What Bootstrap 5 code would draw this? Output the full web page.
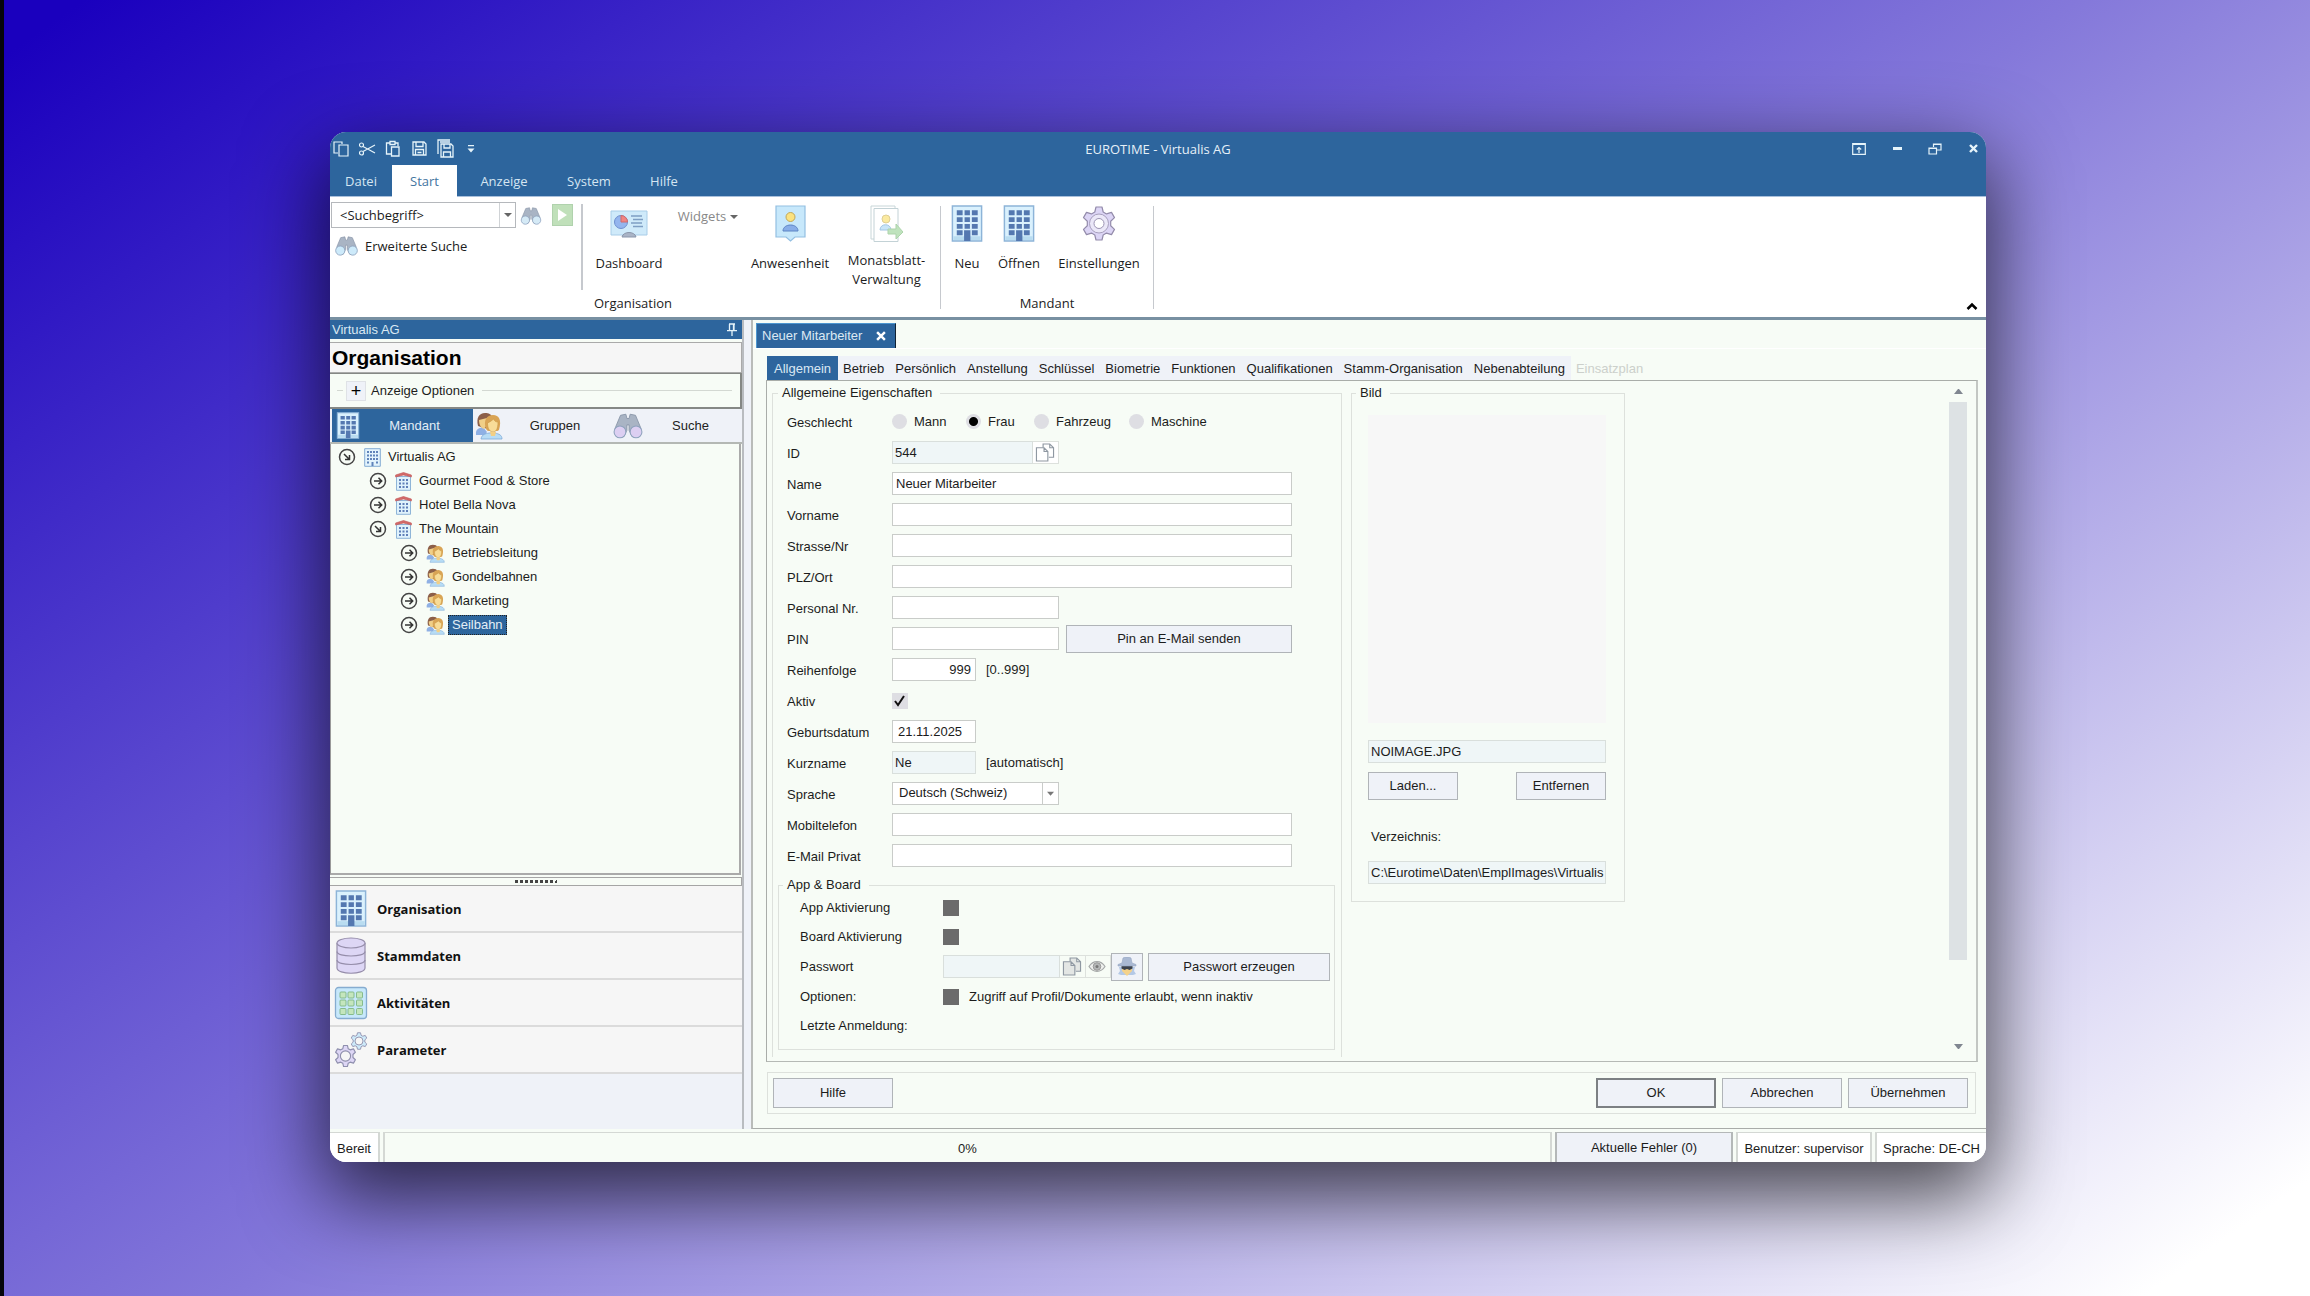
<!DOCTYPE html>
<html lang="de">
<head>
<meta charset="utf-8">
<meta name="viewport" content="width=device-width, initial-scale=1">
<title>EUROTIME - Virtualis AG</title>
<link href="https://cdn.jsdelivr.net/npm/bootstrap@5.3.0/dist/css/bootstrap.min.css" rel="stylesheet">
<style>
:root{--blue:#2d659d;--mint:#f7fcf6;--pale:#eff2f8;--ro:#eff6f7;--line:#b4b8b4;--soft:#dde1dc}
body{margin:0;min-height:100vh;padding:132px 324px 134px 330px;border-left:0;
 background:linear-gradient(90deg,#05050a 4px,transparent 4px),linear-gradient(145deg,#1a00be 2%,#8478da 50%,#fff 96%);
 font:13px/18px "Liberation Sans",Arial,sans-serif;color:#1c1c1c}
button,input,select{font:inherit;color:inherit}
.appwin{flex:1;min-width:0;border-radius:16px;overflow:hidden;background:var(--mint);box-shadow:0 30px 80px 6px rgba(0,0,0,.68)}
.ui{font-family:"Open Sans","Noto Sans",sans-serif}
.bare{border:0;background:none;padding:0}
/* title bar and ribbon */
.titlebar{background:var(--blue);color:#e6f0f8;height:33px}
.quick{gap:6px;padding-left:1px;width:160px}
.quick button,.winbtns button{height:22px;width:20px;color:#e6f4fa;display:flex;align-items:center;justify-content:center}
.winbtns{width:160px;justify-content:flex-end;gap:18px;padding-right:3px}
.menutabs{background:var(--blue);height:32px;border-bottom:1px solid #a9c0dc}
.menutabs .nav-link{height:32px;color:#d5e6f2;padding:0;line-height:32px;text-align:center;border-radius:0}
.menutabs .nav-link.active{background:#fff;color:#44759f}
.ribbon{background:#fff;height:123px;border-bottom:3px solid #7890a2;position:relative}
.searchcol{width:251px;padding:5px 0 0 1px}
.combo{width:185px;height:26px;border:1px solid #b5b8bc;background:#fff}
.combo input{border:0;padding:0 0 0 8px;min-width:0;flex:1;outline:0}
.combo button{width:16px;border-left:1px solid #d0d3d6;line-height:14px}
.caret{display:inline-block;border:4px solid transparent;border-top-color:#666;border-bottom:0}
.go{width:21px;height:22px;background:#c0e0ba;border:1px solid #b0d2ad}
.vrule{width:1px;background:#c6c9ce;margin-top:9px;height:103px}
.vrule.shorter{height:86px;margin-top:7px;width:2px}
.rb{display:flex;flex-direction:column;align-items:center;line-height:19px;padding:8px 0 0;white-space:nowrap}
.rb svg{margin-bottom:12px}
.rb .two{margin-top:-3px}
.gcap{line-height:20px;text-align:center}
.chev{position:absolute;right:8px;bottom:3px}
/* left side */
.side{width:414px;border-right:2px solid #b9bcc0;background:var(--mint)}
.sidehead{background:var(--blue);color:#d9e8f3;height:19px;padding:0 5px 0 2px}
.sidetitle{font:bold 21px/30px "Liberation Sans",Arial,sans-serif;background:#f6f6f6;border:1px solid #aaa;border-left:0;margin-top:3px;padding-left:2px;height:31px;color:#000}
.optbox{height:36px;border:2px solid #858885;border-left:0;border-top-width:1px;padding:0 8px 0 7px}
.optbox hr{margin:0;opacity:1;border-color:#d3d8d2}
.plus{width:20px;height:20px;background:var(--pale);border:1px solid #dfe2e6;line-height:16px;font-size:18px;padding:0;color:#000}
.sidetabs{height:35px;border-bottom:2px solid var(--line);padding-left:2px;background:var(--pale)}
.sidetabs .nav-link{padding:0 4px 0 2px;color:#222;border-radius:0;height:33px;display:flex;align-items:center;width:138px;flex-shrink:0}
.sidetabs .nav-link.active{background:var(--blue);color:#e3eef6;width:141px;padding-left:4px}
.sidetabs .nav-link:last-child{flex:1 1 0;width:auto}
.sidetabs .nav-link span{flex:1;text-align:center}
.tree{flex:1;border-left:1px solid #999;border-right:2px solid #aaa;border-bottom:2px solid #aaa;padding:1px 0 0 7px;margin-right:1px}
.tree ul{list-style:none;margin:0;padding-left:31px}
.tree>ul{padding-left:0}
.node{height:24px;display:flex;align-items:center}
.node>svg:first-child{margin-right:8px}
.node span{padding:1px 4px 1px 4px;line-height:18px;margin-left:3px}
.node span.sel{background:var(--blue);color:#e3eef6;outline:1px dotted #222;outline-offset:-1px}
.grip{height:9px;margin-top:2px;border:1px solid #a5a5a5;border-left:0;display:flex;justify-content:center;align-items:center}
.grip i{width:42px;height:3px;background:repeating-linear-gradient(100deg,#444 0 3px,transparent 3px 5px)}
.bignav{background:var(--pale);height:243px}
.bignav a{display:flex;align-items:center;height:47px;padding-left:4px;background:#f6f6f6;border-bottom:2px solid #dbdbdb;color:#111;text-decoration:none;font-weight:700}
.bignav svg{margin-right:9px}
/* form side */
.gutter{width:7px;background:var(--pale)}
.main{flex:1;min-width:0;border-left:2px solid #b9bcb9;border-bottom:1px solid #a9aca9;background:var(--mint)}
.doctabs{border-bottom:1px solid #fff;padding:3px 0 0 3px}
.doctab{background:var(--blue);color:#dce9f3;height:25px;width:140px;padding:0 9px 0 5px;border-right:1px solid #123;border-top:1px solid #4d96cf;border-left:1px solid #4d96cf}
.ftabs{margin:7px 0 0 14px}
.ftabs .nav-link{height:24px;line-height:26px;padding:0 6px 0 5px;border-radius:0;color:#1c1c1c;background:var(--pale)}
.ftabs .nav-link.active{background:var(--blue);color:#d9e8f3;padding:0 7px}
.ftabs .nav-link.disabled{background:none;color:#ccd0cb}
.pane{flex:1;margin:0 8px 0 13px;border:1px solid #a9ada9;border-right:2px solid #c3c7c3;border-bottom-color:#b5b9b5;padding:4px 9px 4px 5px}
fieldset{border:1px solid var(--soft);min-width:0}
fieldset legend{float:none;width:auto;font-size:13px;line-height:16px;margin:0;padding:0 8px 0 4px}
.props{width:570px;border-bottom:0;padding:5px 6px 0 5px}
.pic{width:274px;margin-left:9px;padding:14px 18px 17px 16px}
.frow{display:flex;align-items:center;height:31px;padding-left:9px}
.frow>label:first-child,.frow>.cap{width:105px;padding-top:3px}
.frow .hint{padding-left:10px}
.fld{height:23px;border:1px solid #c9ccc9;border-radius:0;background:#fff;padding:0 2px 1px 3px;min-width:0;display:block}
input.fld:read-only{background:var(--ro);border-color:#d9dfdc;padding-left:2px}
.w-l{width:400px}.w-m{width:167px}.w-s{width:84px}.w-id{width:141px}.w-pw{width:117px}
select.fld{appearance:none;background:url("data:image/svg+xml,%3Csvg xmlns='http://www.w3.org/2000/svg' width='16' height='22'%3E%3Cpath d='M0 0v22' stroke='%23c9ccc9' stroke-width='2'/%3E%3Cpath d='M5 9h7l-3.500 4z' fill='%23777'/%3E%3C/svg%3E") right center no-repeat #fff;padding-left:6px}
.pbtn{background:var(--pale);border:1px solid #b0b4b8;border-radius:0;height:28px;padding:0}
.pbtn.std{width:120px;height:30px}
.pbtn.dflt{border:2px solid #7c8083}
.mini{height:23px;width:26px;border:1px solid #dde1dd;border-left:0;background:#fff;padding:0 2px 0 0;display:flex;align-items:center;justify-content:center}
input[type=radio]{appearance:none;width:15px;height:15px;border-radius:50%;background:#dedee3;margin:0 7px 0 0}
input[type=radio]:checked{background:radial-gradient(circle,#000 0 4px,#dedee3 5px)}
.rlab{display:flex;align-items:center}
input[type=checkbox]{appearance:none;width:16px;height:16px;margin:0;background:#6b6b6b}
#aktiv{background:url("data:image/svg+xml,%3Csvg xmlns='http://www.w3.org/2000/svg' viewBox='0 0 16 16'%3E%3Cpath d='M3 8l3 4 6-9' fill='none' stroke='%23111' stroke-width='2'/%3E%3C/svg%3E") #dedee3}
.appb{margin-top:6px;padding:0 4px 9px 12px}
.appb .frow{height:29px}
.appb .frow.pw{height:31px}
.appb .frow>label:first-child,.appb .frow>.cap{width:143px;padding-top:0}
.photo{height:308px;background:#f7f7f7}
.sbar{width:18px;margin-left:auto}
.sbar .thumb{flex:0 0 558px;background:#dde2e4}
.sbar .up,.sbar .dn{border:4px solid transparent;width:9px;margin:0 5px}
.sbar .up{border-bottom:5px solid #808690;border-top:0}
.sbar .dn{border-top:5px solid #808690;border-bottom:0}
.actions{margin:10px 10px 14px 14px;border:1px solid var(--soft);height:42px;padding:0 7px 0 5px;gap:6px}
.status{height:33px;padding-top:3px;gap:3px}
.scell{border:2px solid #d4d8d4;border-bottom:0;background:#fff;display:flex;align-items:center;justify-content:center;border-top-width:1px;padding-top:2px}
</style>
</head>
<body class="d-flex">
<svg width="0" height="0" class="position-absolute" aria-hidden="true">
 <symbol id="bldg" viewBox="0 0 32 38"><path d="M1 1h30v36H1z" fill="#daf1fd" stroke="#8db4d8" stroke-width="1.500"/><path d="M2 32h28v4H2z" fill="#b9dcf0"/><path d="M5.500 5.500h6v5h-6zM13.500 5.500h5.500v5h-5.500zM21 5.500h6v5h-6zM5.500 12.500h6v5h-6zM13.500 12.500h5.500v5h-5.500zM21 12.500h6v5h-6zM5.500 19.500h6v5h-6zM13.500 19.500h5.500v5h-5.500zM21 19.500h6v5h-6zM5.500 26h6v5h-6zM21 26h6v5h-6zM13 26h6.500v11H13z" fill="#5478b0"/></symbol>
 <symbol id="bldg-s" viewBox="0 0 17 19"><path d="M.7.7h15.600v17.600H.7z" fill="#e3f4fd" stroke="#84acd2"/><path d="M3 3h2v2H3zM6 3h2v2H6zM9 3h2v2H9zM12 3h2v2h-2zM3 6.500h2v2H3zM6 6.500h2v2H6zM9 6.500h2v2H9zM12 6.500h2v2h-2zM3 10h2v2H3zM6 10h2v2H6zM9 10h2v2H9zM12 10h2v2h-2zM3 13.500h2v2H3zM12 13.500h2v2h-2zM7.500 14h2v4h-2z" fill="#5f83ba"/></symbol>
 <symbol id="store" viewBox="0 0 17 19"><path d="M1.500 4.500h14v13.800h-14z" fill="#dff2fc" stroke="#8fb5d8"/><path d="M.6 5V3l7.900-2.500L16.400 3v2L8.500 3z" fill="#d36a69" stroke="#c15455" stroke-width=".6"/><path d="M4 7h2v2H4zM7.500 7h2v2h-2zM11 7h2v2h-2zM4 10.500h2v2H4zM7.500 10.500h2v2h-2zM11 10.500h2v2h-2zM4 14h2v2H4zM7.500 14h2v2h-2zM11 14h2v2h-2z" fill="#5f7fb8"/></symbol>
 <symbol id="ppl" viewBox="0 0 28 28"><path d="M1 20c1-4 4-4 7-5l4 5-2 3H1z" fill="#8fb0e4"/><path d="M3 14C1 6 4 1 10 1c4 0 6 1 7 4l-3 12-5-1z" fill="#8c5f49"/><path d="M4 8c0 5 2 8 5 9l3-4V6z" fill="#f0cf87"/><path d="M6 27c1-5 4-5 8-6h6c4 1 7 2 7 6z" fill="#b7dcf5" stroke="#7fa9d8" stroke-width=".8"/><path d="M11 17C8 8 12 3 18 3s9 5 6 15c-1 1-2 1-3 1h-7c-2 0-2-1-3-2z" fill="#d9a455"/><path d="M12.500 11c2-1 4-2 6-4 1 2 2 3 4.500 3 0 7-2 10-5 10s-5.500-3-5.500-9z" fill="#f8dc98" stroke="#c9963f" stroke-width=".6"/><path d="M15 20h6l-1 4h-4z" fill="#f3cf84"/></symbol>
 <symbol id="bino" viewBox="0 0 28 24"><path d="M7 2l5-1 1 4h2l1-4 5 1 5 12-1 6-7 2-3-6v-5h-2v5l-3 6-7-2-1-6z" fill="#a9b4c4" stroke="#8793a6" stroke-width=".8"/><circle cx="6.500" cy="17.500" r="5.500" fill="currentColor" stroke="#8ea2bd"/><circle cx="21.500" cy="17.500" r="5.500" fill="currentColor" stroke="#8ea2bd"/></symbol>
 <symbol id="gear" viewBox="0 0 36 36"><path d="M15 1.500h6l1.200 5 3.300 1.900 5-1.500 3 5.200-3.800 3.600v4.600l3.800 3.600-3 5.200-5-1.500-3.300 1.900-1.200 5h-6l-1.200-5-3.300-1.900-5 1.500-3-5.200 3.800-3.600v-4.600l-3.800-3.600 3-5.200 5 1.500 3.300-1.900z" fill="currentColor" stroke="#948cab" stroke-width="1.200" stroke-linejoin="round"/><circle cx="18" cy="18" r="9.500" fill="#ebe8f8" stroke="#a79fbd"/><circle cx="18" cy="18" r="5" fill="#fff" stroke="#9c94b3"/></symbol>
 <symbol id="gear-o" viewBox="0 0 36 36"><path d="M15 1.500h6l1.200 5 3.300 1.900 5-1.500 3 5.200-3.800 3.600v4.600l3.800 3.600-3 5.200-5-1.500-3.300 1.900-1.200 5h-6l-1.200-5-3.300-1.900-5 1.500-3-5.200 3.800-3.600v-4.600l-3.800-3.600 3-5.200 5 1.500 3.300-1.900z" fill="currentColor" stroke="#8f8fae" stroke-width="1.800" stroke-linejoin="round"/><circle cx="18" cy="18" r="8" fill="#f6f6f6" stroke="#9090ac" stroke-width="1.800"/></symbol>
 <symbol id="open" viewBox="0 0 18 18"><circle cx="9" cy="9" r="7.500" fill="none" stroke="#444" stroke-width="1.500"/><path d="M6 6l5 5M11.500 7v4.500H7" fill="none" stroke="#333" stroke-width="1.500"/></symbol>
 <symbol id="shut" viewBox="0 0 18 18"><circle cx="9" cy="9" r="7.500" fill="none" stroke="#444" stroke-width="1.500"/><path d="M5 9h7.500M9.500 5.800L12.700 9l-3.200 3.200" fill="none" stroke="#333" stroke-width="1.500"/></symbol>
 <symbol id="copy" viewBox="0 0 20 20"><path d="M8 5V1h7l4 4v10h-5M15 1v4h4" fill="currentColor" stroke="#8f98a2" stroke-width="1.200"/><path d="M1 5h8l4 4v10H1zM9 5v4h4" fill="currentColor" stroke="#8f98a2" stroke-width="1.200"/></symbol>
</svg>

<div class="appwin d-flex flex-column">
 <header class="ui">
  <div class="titlebar d-flex align-items-center justify-content-between">
   <div class="quick d-flex">
    <button class="bare" aria-label="Kopieren"><svg width="16" height="16" viewBox="0 0 16 16" fill="none" stroke="currentColor" stroke-width="1.200"><path d="M5 12H1V1h8v2M6 4h9v11H6z"/></svg></button>
    <button class="bare" aria-label="Ausschneiden"><svg width="18" height="14" viewBox="0 0 18 14" fill="none" stroke="currentColor" stroke-width="1.200"><circle cx="3.500" cy="3" r="2"/><circle cx="3.500" cy="11" r="2"/><path d="M5 4.500L17 11M5 9.500L17 3"/></svg></button>
    <button class="bare" aria-label="Einfügen"><svg width="16" height="17" viewBox="0 0 16 17" fill="none" stroke="currentColor" stroke-width="1.300"><path d="M6 14H1.500V3H5m5 0h3v3M5 1.500h5v3H5zM6.500 7h7.500v9H6.500z"/></svg></button>
    <button class="bare" aria-label="Speichern"><svg width="15" height="15" viewBox="0 0 15 15" fill="none" stroke="currentColor" stroke-width="1.300"><path d="M1 1h11l2 2v11H1zM4 1v4.500h7V1M3.500 14V8.500h8V14M5.500 11.500h4"/></svg></button>
    <button class="bare" aria-label="Alle speichern"><svg width="17" height="19" viewBox="0 0 17 19" fill="none" stroke="currentColor" stroke-width="1.300"><path d="M1 15V1h12M4 5h10l2 2v11H4zM7 5v4h6V5M6.500 18v-5h7v5M3 3h10"/></svg></button>
    <button class="bare" aria-label="Anpassen"><svg width="8" height="8" viewBox="0 0 8 8" fill="currentColor"><path d="M1 0h6v1.300H1zM.5 3.500h7L4 7.500z"/></svg></button>
   </div>
   <div>EUROTIME - Virtualis AG</div>
   <div class="winbtns d-flex">
    <button class="bare" aria-label="Menüband"><svg width="14" height="12" viewBox="0 0 14 12" fill="none" stroke="currentColor" stroke-width="1.200"><path d="M.7.7h12.600v10.600H.7zM.7 1.500h12.600M7 10V4.500M4.800 6.500L7 4.500l2.200 2"/></svg></button>
    <button class="bare" aria-label="Minimieren"><svg width="9" height="3"><path d="M0 0h9v3H0z" fill="currentColor"/></svg></button>
    <button class="bare" aria-label="Wiederherstellen"><svg width="14" height="12" viewBox="0 0 14 12" fill="none" stroke="currentColor" stroke-width="1.200"><path d="M5.500 4V1h7.500v6H9M1 5h7.500v6H1zM5.500 1.500H13M1 5.500h7.500"/></svg></button>
    <button class="bare" aria-label="Schliessen"><svg width="9" height="9" viewBox="0 0 9 9" stroke="currentColor" stroke-width="2.400"><path d="M1 1l7 7M8 1L1 8"/></svg></button>
   </div>
  </div>
  <nav class="menutabs nav flex-nowrap">
   <a class="nav-link" style="width:62px" href="#">Datei</a>
   <a class="nav-link active" style="width:65px" href="#">Start</a>
   <a class="nav-link" style="width:94px" href="#">Anzeige</a>
   <a class="nav-link" style="width:76px" href="#">System</a>
   <a class="nav-link" style="width:74px" href="#">Hilfe</a>
  </nav>
  <div class="ribbon d-flex">
   <div class="searchcol">
    <div class="d-flex align-items-center">
     <div class="combo d-flex"><input type="text" value="&lt;Suchbegriff&gt;" aria-label="Suchbegriff"><button class="bare d-flex align-items-center justify-content-center" aria-label="Liste öffnen"><span class="caret"></span></button></div>
     <button class="bare ms-1" aria-label="Suchen"><svg width="22" height="18" style="color:#d5eaf6"><use href="#bino"/></svg></button>
     <button class="go bare d-flex align-items-center justify-content-center" style="margin-left:10px" aria-label="Start"><svg width="9" height="12"><path d="M0 0l9 6-9 6z" fill="#fff"/></svg></button>
    </div>
    <button class="bare d-flex align-items-center mt-2" style="margin-left:3px"><svg width="25" height="20" style="color:#cdeafa;margin-right:6px"><use href="#bino"/></svg>Erweiterte Suche</button>
   </div>
   <div class="vrule shorter"></div>
   <div class="d-flex flex-column">
    <div class="d-flex flex-fill">
     <button class="bare rb" style="width:92px"><svg width="38" height="37" viewBox="0 0 38 37"><path d="M1 6h36v24H1z" fill="#cfeafa" stroke="#a8cde8"/><circle cx="11" cy="17" r="6.500" fill="#94b5ee" stroke="#6f90cf"/><path d="M11 17V10.500a6.500 6.500 0 0 1 6.500 6.500z" fill="#f08583" stroke="#cf6a6d"/><path d="M21 11h11M23 14.500h10M21 18h11M23 21.500h10" stroke="#7f9fc4" stroke-width="1.300"/><path d="M12 32c1-6 13-6 14 0z" fill="#aab4c6" stroke="#8a96ab"/></svg>Dashboard</button>
     <button class="bare rb pt-2" style="width:66px;color:#888"><span class="d-flex align-items-center" style="padding-top:2px">Widgets <i class="caret ms-1"></i></span></button>
     <button class="bare rb" style="width:98px"><svg width="31" height="37" viewBox="0 0 31 37"><path d="M1 1h29v31H20l-4.500 4-4.500-4H1z" fill="#c7e8fb" stroke="#93bfe2" stroke-width="1.200"/><path d="M8 26c0-8 15-8 15 0z" fill="#88aee8" stroke="#5d84c4"/><circle cx="15.500" cy="12" r="4.500" fill="#fbe27f" stroke="#c0a75a"/></svg>Anwesenheit</button>
     <button class="bare rb" style="width:101px;padding-right:6px"><svg width="33" height="37" viewBox="0 0 33 37"><path d="M1 1h24v33H1z" fill="#fff" stroke="#c8d6d8"/><path d="M4 3.500h24v33H4z" fill="#fff" stroke="#c3d2d6"/><circle cx="16" cy="14" r="4" fill="#fbeaa0" stroke="#dfcf95"/><path d="M10 25c0-7 11-7 11 0z" fill="#c9e5f8" stroke="#a3c6e4"/><path d="M18 24h8v-5l7 8-7 7v-5h-8z" fill="#bfe3bd" stroke="#add3ab"/></svg><span class="two">Monatsblatt-<br>Verwaltung</span></button>
    </div>
    <div class="gcap pb-1" style="width:100px">Organisation</div>
   </div>
   <div class="vrule"></div>
   <div class="d-flex flex-column">
    <div class="d-flex flex-fill">
     <button class="bare rb" style="width:52px"><svg width="32" height="37"><use href="#bldg"/></svg>Neu</button>
     <button class="bare rb" style="width:52px"><svg width="32" height="37"><use href="#bldg"/></svg>Öffnen</button>
     <button class="bare rb" style="width:108px"><svg width="36" height="37" style="color:#dcd5f5"><use href="#gear"/></svg>Einstellungen</button>
    </div>
    <div class="gcap pb-1">Mandant</div>
   </div>
   <div class="vrule"></div>
   <button class="bare chev" aria-label="Menüband reduzieren"><svg width="12" height="12" viewBox="0 0 12 12"><path d="M1.500 8L6 3.500 10.500 8" fill="none" stroke="#000" stroke-width="2.500"/></svg></button>
  </div>
 </header>

 <div class="d-flex flex-fill">
  <aside class="side d-flex flex-column">
   <div class="sidehead d-flex justify-content-between align-items-center"><span>Virtualis AG</span><svg width="10" height="13" viewBox="0 0 10 13" fill="none" stroke="#e6f4fa" stroke-width="1.300"><path d="M2.500 1v6.500M7 1v6.500M2 1h6M0 7.700h10M5 8v5M6.500 1v6"/></svg></div>
   <h1 class="sidetitle mb-0">Organisation</h1>
   <div class="optbox d-flex align-items-center"><hr style="width:6px"><button class="plus" style="margin:0 5px 0 3px" aria-label="Aufklappen">+</button><span class="pe-2">Anzeige Optionen</span><hr class="flex-fill"></div>
   <nav class="sidetabs nav flex-nowrap">
    <a class="nav-link active" href="#"><svg width="24" height="27"><use href="#bldg"/></svg><span>Mandant</span></a>
    <a class="nav-link" href="#"><svg width="28" height="28"><use href="#ppl"/></svg><span>Gruppen</span></a>
    <a class="nav-link" href="#"><svg width="30" height="26" style="color:#dccff2"><use href="#bino"/></svg><span>Suche</span></a>
   </nav>
   <div class="tree">
    <ul>
     <li><div class="node"><svg width="18" height="18"><use href="#open"/></svg><svg width="17" height="19"><use href="#bldg-s"/></svg><span>Virtualis AG</span></div>
      <ul>
       <li><div class="node"><svg width="18" height="18"><use href="#shut"/></svg><svg width="17" height="19"><use href="#store"/></svg><span>Gourmet Food &amp; Store</span></div></li>
       <li><div class="node"><svg width="18" height="18"><use href="#shut"/></svg><svg width="17" height="19"><use href="#store"/></svg><span>Hotel Bella Nova</span></div></li>
       <li><div class="node"><svg width="18" height="18"><use href="#open"/></svg><svg width="17" height="19"><use href="#store"/></svg><span>The Mountain</span></div>
        <ul>
         <li><div class="node"><svg width="18" height="18"><use href="#shut"/></svg><svg width="19" height="19"><use href="#ppl"/></svg><span>Betriebsleitung</span></div></li>
         <li><div class="node"><svg width="18" height="18"><use href="#shut"/></svg><svg width="19" height="19"><use href="#ppl"/></svg><span>Gondelbahnen</span></div></li>
         <li><div class="node"><svg width="18" height="18"><use href="#shut"/></svg><svg width="19" height="19"><use href="#ppl"/></svg><span>Marketing</span></div></li>
         <li><div class="node"><svg width="18" height="18"><use href="#shut"/></svg><svg width="19" height="19"><use href="#ppl"/></svg><span class="sel">Seilbahn</span></div></li>
        </ul></li>
      </ul></li>
    </ul>
   </div>
   <div class="grip"><i></i></div>
   <nav class="bignav ui">
    <a href="#"><svg width="34" height="37"><use href="#bldg"/></svg>Organisation</a>
    <a href="#"><svg width="34" height="37" viewBox="0 0 34 37"><path d="M3 6v25c0 7 28 7 28 0V6" fill="#ddd6f5" stroke="#958daa" stroke-width="1.200"/><path d="M3 14.500c0 6 28 6 28 0M3 23c0 6 28 6 28 0" fill="none" stroke="#958daa" stroke-width="1.200"/><ellipse cx="17" cy="6" rx="14" ry="5" fill="#ddd6f5" stroke="#958daa" stroke-width="1.200"/></svg>Stammdaten</a>
    <a href="#"><svg width="34" height="34" viewBox="0 0 34 34"><rect x="1.500" y="1.500" width="31" height="31" rx="3" fill="#c7e8fb" stroke="#86acd0" stroke-width="1.300"/><g fill="#c4e6bd" stroke="#86bb8c"><rect x="6" y="6" width="6" height="6" rx="1"/><rect x="14" y="6" width="6" height="6" rx="1"/><rect x="22.500" y="6" width="6" height="6" rx="1"/><rect x="6" y="14" width="6" height="6" rx="1"/><rect x="14" y="14" width="6" height="6" rx="1"/><rect x="22.500" y="14" width="6" height="6" rx="1"/><rect x="6" y="22.500" width="6" height="6" rx="1"/><rect x="14" y="22.500" width="6" height="6" rx="1"/><rect x="22.500" y="22.500" width="6" height="6" rx="1"/></g></svg>Aktivitäten</a>
    <a href="#"><svg width="34" height="37" viewBox="0 0 34 37"><use href="#gear-o" x="0" y="13" width="23" height="24" style="color:#ddd6f5"/><use href="#gear-o" x="16" y="0" width="18" height="20" style="color:#cdeafa"/></svg>Parameter</a>
   </nav>
  </aside>
  <div class="gutter"></div>
  <main class="main d-flex flex-column">
   <div class="doctabs"><div class="doctab d-flex align-items-center justify-content-between">Neuer Mitarbeiter<button class="bare d-flex text-white" aria-label="Tab schliessen"><svg width="10" height="10" viewBox="0 0 9 9" stroke="currentColor" stroke-width="2.200"><path d="M1 1l7 7M8 1L1 8"/></svg></button></div></div>
   <nav class="ftabs nav flex-nowrap">
    <a class="nav-link active" href="#">Allgemein</a><a class="nav-link" href="#">Betrieb</a><a class="nav-link" href="#">Persönlich</a><a class="nav-link" href="#">Anstellung</a><a class="nav-link" href="#">Schlüssel</a><a class="nav-link" href="#">Biometrie</a><a class="nav-link" href="#">Funktionen</a><a class="nav-link" href="#">Qualifikationen</a><a class="nav-link" href="#">Stamm-Organisation</a><a class="nav-link" href="#">Nebenabteilung</a><a class="nav-link disabled" aria-disabled="true">Einsatzplan</a>
   </nav>
   <form class="pane d-flex" id="emp">
    <fieldset class="props">
     <legend>Allgemeine Eigenschaften</legend>
     <div class="frow"><span class="cap">Geschlecht</span>
      <label class="rlab" style="width:74px"><input type="radio" name="g">Mann</label>
      <label class="rlab" style="width:68px"><input type="radio" name="g" checked>Frau</label>
      <label class="rlab" style="width:95px"><input type="radio" name="g">Fahrzeug</label>
      <label class="rlab"><input type="radio" name="g">Maschine</label></div>
     <div class="frow"><label for="id">ID</label><input class="fld w-id" id="id" value="544" readonly><button type="button" class="mini" aria-label="ID kopieren"><svg width="20" height="19" style="color:#fff"><use href="#copy"/></svg></button></div>
     <div class="frow"><label for="nm">Name</label><input class="fld w-l" id="nm" value="Neuer Mitarbeiter"></div>
     <div class="frow"><label for="vn">Vorname</label><input class="fld w-l" id="vn"></div>
     <div class="frow"><label for="st">Strasse/Nr</label><input class="fld w-l" id="st"></div>
     <div class="frow"><label for="plz">PLZ/Ort</label><input class="fld w-l" id="plz"></div>
     <div class="frow"><label for="pn">Personal Nr.</label><input class="fld w-m" id="pn"></div>
     <div class="frow"><label for="pin">PIN</label><input class="fld w-m" id="pin"><button type="button" class="pbtn" style="width:226px;margin-left:7px">Pin an E-Mail senden</button></div>
     <div class="frow"><label for="rf">Reihenfolge</label><input class="fld w-s text-end pe-1" id="rf" value="999"><span class="hint">[0..999]</span></div>
     <div class="frow"><label for="aktiv">Aktiv</label><input type="checkbox" id="aktiv" checked></div>
     <div class="frow"><label for="gd">Geburtsdatum</label><input class="fld w-s" style="padding-left:5px" id="gd" value="21.11.2025"></div>
     <div class="frow"><label for="kn">Kurzname</label><input class="fld w-s" id="kn" value="Ne" readonly><span class="hint">[automatisch]</span></div>
     <div class="frow"><label for="sp">Sprache</label><select class="fld w-m" id="sp"><option>Deutsch (Schweiz)</option></select></div>
     <div class="frow"><label for="mt">Mobiltelefon</label><input class="fld w-l" id="mt"></div>
     <div class="frow"><label for="em">E-Mail Privat</label><input class="fld w-l" id="em"></div>
     <fieldset class="appb">
      <legend style="margin-left:-8px">App &amp; Board</legend>
      <div class="frow"><label for="aa">App Aktivierung</label><input type="checkbox" id="aa"></div>
      <div class="frow"><label for="ba">Board Aktivierung</label><input type="checkbox" id="ba"></div>
      <div class="frow pw"><label for="pw">Passwort</label><input class="fld w-pw" id="pw" readonly><button type="button" class="mini" style="background:none" aria-label="Kopieren"><svg width="20" height="19" style="color:#e3e6e4"><use href="#copy"/></svg></button><button type="button" class="mini" style="background:none;width:25px" aria-label="Anzeigen"><svg width="18" height="13" viewBox="0 0 18 13"><path d="M1 6.500C5 0 13 0 17 6.500 13 13 5 13 1 6.500z" fill="#eef0ee" stroke="#a5a8a8" stroke-width="1.200"/><circle cx="9" cy="6.500" r="3.800" fill="#b4b7b7" stroke="#999"/><circle cx="9" cy="6.500" r="1.500" fill="#777"/></svg></button><button type="button" class="pbtn d-flex align-items-center justify-content-center" style="width:32px" aria-label="Inkognito"><svg width="20" height="19" viewBox="0 0 20 19"><path d="M2 10h16l-1 4 2 3-3 1H4l-3-1 2-3z" fill="#b4c9e6"/><path d="M5 9h10v5l-5 5-5-5z" fill="#f4d28a"/><path d="M4.500 9h11v2.500l-3 1.500-2.500-1-2.500 1-3-1.500z" fill="#3d434d"/><path d="M1 7.500L5 6l1-5c2-1.300 6-1.300 8 0l1 5 4 1.500V9H1z" fill="#aab9d3" stroke="#96a6c2" stroke-width=".6"/></svg></button><button type="button" class="pbtn" style="width:182px;margin-left:5px">Passwort erzeugen</button></div>
      <div class="frow"><span class="cap">Optionen:</span><label class="rlab"><input type="checkbox" style="margin-right:10px">Zugriff auf Profil/Dokumente erlaubt, wenn inaktiv</label></div>
      <div class="frow"><span class="cap">Letzte Anmeldung:</span></div>
     </fieldset>
    </fieldset>
    <fieldset class="pic align-self-start">
     <legend style="margin-left:-12px">Bild</legend>
     <div class="photo"></div>
     <input class="fld w-100" style="margin-top:17px" value="NOIMAGE.JPG" readonly aria-label="Bilddatei">
     <div class="d-flex justify-content-between" style="margin-top:9px"><button type="button" class="pbtn" style="width:90px">Laden...</button><button type="button" class="pbtn" style="width:90px">Entfernen</button></div>
     <label for="vz" style="margin:28px 0 15px 3px" class="d-block">Verzeichnis:</label>
     <input class="fld w-100 pe-0" id="vz" value="C:\Eurotime\Daten\EmplImages\Virtualis" readonly>
    </fieldset>
    <div class="sbar d-flex flex-column" aria-hidden="true"><div class="up mt-1 mb-2"></div><div class="thumb"></div><div class="dn mt-auto mb-2"></div></div>
   </form>
   <div class="actions d-flex align-items-center">
    <button class="pbtn std me-auto">Hilfe</button><button class="pbtn std dflt">OK</button><button class="pbtn std">Abbrechen</button><button class="pbtn std">Übernehmen</button>
   </div>
  </main>
 </div>
 <footer class="status d-flex">
  <div class="scell border-start-0" style="width:50px">Bereit</div>
  <div class="scell flex-fill" style="background:var(--mint)">0%</div>
  <button class="scell" style="width:178px;background:var(--pale);border-color:#b4b8b8">Aktuelle Fehler (0)</button>
  <div class="scell" style="width:136px">Benutzer: supervisor</div>
  <div class="scell border-end-0" style="width:111px">Sprache: DE-CH</div>
 </footer>
</div>
<script src="https://cdn.jsdelivr.net/npm/bootstrap@5.3.0/dist/js/bootstrap.bundle.min.js"></script>
</body>
</html>
